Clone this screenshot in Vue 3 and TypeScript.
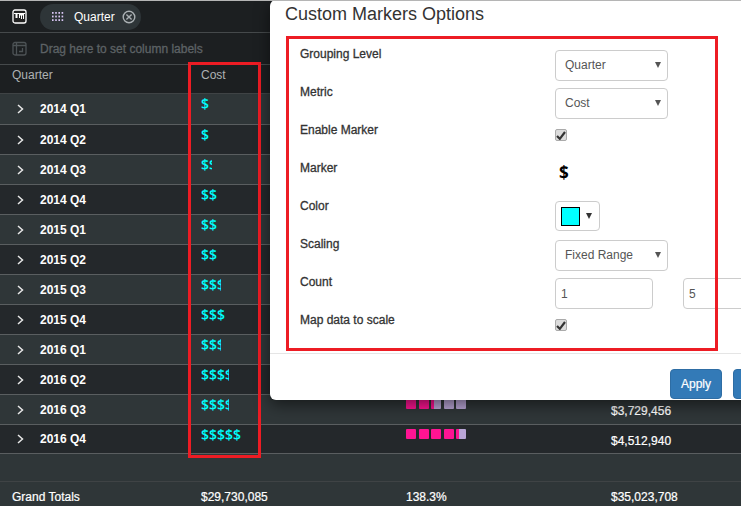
<script setup lang="ts">
interface Row {
  label: string
  clip: number
  fill?: number
  total?: string
}

const rows: Row[] = [
  { label: '2014 Q1', clip: 8 },
  { label: '2014 Q2', clip: 8 },
  { label: '2014 Q3', clip: 11 },
  { label: '2014 Q4', clip: 16 },
  { label: '2015 Q1', clip: 16 },
  { label: '2015 Q2', clip: 16 },
  { label: '2015 Q3', clip: 20 },
  { label: '2015 Q4', clip: 24 },
  { label: '2016 Q1', clip: 20 },
  { label: '2016 Q2', clip: 28 },
  { label: '2016 Q3', clip: 28, fill: 2.3, total: '$3,729,456' },
  { label: '2016 Q4', clip: 40, fill: 4.3, total: '$4,512,940' },
]

function squareStyle(index: number, fill: number) {
  const amount = Math.max(0, Math.min(1, fill - index)) * 100
  return {
    background: `linear-gradient(90deg, #ff1493 ${amount}%, #b9a5d6 ${amount}%)`,
  }
}
</script>

<template>
  <div class="page">
    <div class="shelf">
      <svg class="logo" width="15" height="15" viewBox="0 0 15 15">
        <rect x="1" y="1" width="13" height="13" rx="2" fill="#222" stroke="#fff" stroke-width="1.3" />
        <path d="M2 4h11v1H2zM3.500 5h2v4h-2zM7 5h5v5h-1V6.500h-1V10H9V6.500H8V9H7z" fill="#fff" />
      </svg>
      <div class="pill">
        <svg width="12" height="10" viewBox="0 0 12 10" fill="#d9c6f5">
          <rect v-for="n in 12" :key="n" :x="((n - 1) % 4) * 3.2" :y="Math.floor((n - 1) / 4) * 3.6" width="1.6" height="1.8" />
        </svg>
        <span class="pill-text">Quarter</span>
        <svg width="14" height="14" viewBox="0 0 14 14" fill="none" stroke="#aab0b3" stroke-width="1.4">
          <circle cx="7" cy="7" r="5.800" />
          <path d="M4.400 4.400l5.200 5.200M9.600 4.400l-5.200 5.200" />
        </svg>
      </div>
    </div>
    <div class="shelf shelf-drop">
      <svg width="15" height="15" viewBox="0 0 15 15" fill="none" stroke="#4d5356" stroke-width="1.3">
        <rect x="1" y="1.500" width="13" height="12.500" rx="2" />
        <path d="M1 4.500h13M4.500 1v13M10.500 7v3.500H7" />
      </svg>
      <span>Drag here to set column labels</span>
    </div>

    <div class="table">
      <div class="row head">
        <div class="cell">Quarter</div>
        <div class="cell">Cost</div>
      </div>
      <div v-for="(row, i) in rows" :key="row.label" class="row" :class="i % 2 ? 'even' : 'odd'">
        <div class="cell quarter">
          <svg width="7" height="10" viewBox="0 0 7 10" fill="none" stroke="#e8e8e8" stroke-width="1.5">
            <path d="M1 1l4.500 4-4.500 4" />
          </svg>
          <span>{{ row.label }}</span>
        </div>
        <div class="cell">
          <div class="markers" :style="{ width: row.clip + 'px' }">$$$$$</div>
        </div>
        <div class="cell">
          <div v-if="row.fill" class="squares">
            <i v-for="n in 5" :key="n" :style="squareStyle(n - 1, row.fill)"></i>
          </div>
        </div>
        <div class="cell total">{{ row.total }}</div>
      </div>
      <div class="row spacer"></div>
      <div class="row grand">
        <div class="cell">Grand Totals</div>
        <div class="cell">$29,730,085</div>
        <div class="cell">138.3%</div>
        <div class="cell">$35,023,708</div>
      </div>
    </div>

    <div class="frame frame-cost"></div>

    <div class="modal">
      <h4>Custom Markers Options</h4>
      <div class="frame frame-form"></div>
      <div class="form">
        <label>Grouping Level</label>
        <div class="select">Quarter</div>
        <label>Metric</label>
        <div class="select">Cost</div>
        <label>Enable Marker</label>
        <div class="check">
          <svg width="10" height="9" viewBox="0 0 10 9"><path d="M1 5l2.800 2.800L9 1" fill="none" stroke="#333" stroke-width="2.200" /></svg>
        </div>
        <label>Marker</label>
        <div class="marker">$</div>
        <label>Color</label>
        <div class="color"><i></i><b></b></div>
        <label>Scaling</label>
        <div class="select">Fixed Range</div>
        <label>Count</label>
        <div class="count">
          <input value="1" />
          <input value="5" />
        </div>
        <label>Map data to scale</label>
        <div class="check">
          <svg width="10" height="9" viewBox="0 0 10 9"><path d="M1 5l2.800 2.800L9 1" fill="none" stroke="#333" stroke-width="2.200" /></svg>
        </div>
      </div>
      <div class="footer">
        <button>Apply</button>
        <button class="cancel">Cancel</button>
      </div>
    </div>
  </div>
</template>

<style>
html,
body {
  margin: 0;
  background: #1c1f21;
}
</style>

<style scoped>
.page {
  position: relative;
  width: 741px;
  height: 506px;
  overflow: hidden;
  background: #1c1f21;
  border-top: 1px solid #b5b5b5;
  box-sizing: border-box;
  font: 12px "Liberation Sans", Arial, sans-serif;
}
.shelf {
  display: flex;
  align-items: center;
  gap: 13px;
  height: 32px;
  padding-left: 12px;
  box-sizing: border-box;
  border-bottom: 1px solid #45494b;
}
.logo {
  flex: none;
}
.pill {
  display: flex;
  align-items: center;
  gap: 7px;
  width: 101px;
  height: 26px;
  padding-left: 12px;
  box-sizing: border-box;
  border-radius: 13px;
  background: #2e3538;
  color: #fff;
}
.pill-text {
  margin-left: 3px;
}
.shelf-drop {
  color: #5d6265;
  -webkit-text-stroke: 0.3px #5d6265;
}
.table {
  display: flex;
  flex-direction: column;
}
.row {
  display: grid;
  grid-template-columns: 189px 205px 205px 142px;
  height: 30px;
  box-sizing: border-box;
  border-bottom: 1px solid #5a5e60;
}
.row.head {
  height: 29px;
  color: #aeb2b4;
  border-bottom-color: #3f4345;
}
.head .cell {
  padding-top: 3px;
}
.row:nth-child(2) {
  height: 31px;
}
.row:nth-child(13) {
  height: 29px;
}
.odd {
  background: #2f3638;
}
.even {
  background: #24282b;
}
.cell {
  padding-left: 12px;
}
.quarter {
  display: flex;
  align-items: center;
  gap: 16px;
  padding-left: 17px;
  font-weight: 700;
  color: #fff;
}
.markers {
  overflow: hidden;
  margin-top: 2px;
  font: 600 14px/16px "Open Sans", sans-serif;
  color: #0ff;
  white-space: nowrap;
}
.squares {
  display: flex;
  gap: 2.5px;
  padding-top: 4px;
}
.squares i {
  display: block;
  width: 10px;
  height: 10px;
  border-radius: 1px;
}
.total {
  padding-top: 9px;
  color: #fff;
  -webkit-text-stroke: 0.2px #fff;
}
.row.spacer {
  height: 28px;
  background: #2f3638;
  border-bottom-color: #3f4345;
}
.row.grand {
  height: 24px;
  padding-top: 8px;
  background: #2f3638;
  color: #fff;
  border: 0;
  -webkit-text-stroke: 0.2px #fff;
}
.frame {
  position: absolute;
  box-sizing: border-box;
  border: 3px solid #ed1c24;
  pointer-events: none;
}
.frame-cost {
  left: 188px;
  top: 61px;
  width: 73px;
  height: 396px;
}
.modal {
  position: absolute;
  left: 270px;
  top: -1px;
  width: 500px;
  height: 400px;
  background: #fff;
  border-radius: 6px;
  box-shadow: 0 5px 15px rgba(0, 0, 0, 0.5);
  color: #333;
}
.modal h4 {
  margin: 0;
  padding: 4px 0 0 15px;
  font-size: 18px;
  font-weight: 400;
  line-height: 20px;
}
.frame-form {
  left: 16px;
  top: 36px;
  width: 432px;
  height: 315px;
}
.form {
  display: grid;
  grid-template-columns: 255px 1fr;
  grid-auto-rows: 38px;
  margin: 26px 0 0 30px;
  height: 303px;
}
.form label {
  margin-top: -3px;
  -webkit-text-stroke: 0.3px #333;
}
.select,
.count input,
.color {
  box-sizing: border-box;
  height: 31px;
  border: 1px solid #ccc;
  border-radius: 4px;
  background: #fff;
  color: #555;
  font: inherit;
}
.select {
  position: relative;
  width: 113px;
  line-height: 29px;
  padding-left: 9px;
}
.select::after {
  content: "";
  position: absolute;
  right: 6px;
  top: 11px;
  border: 3.5px solid transparent;
  border-top: 6px solid #555;
  border-bottom: 0;
}
.check {
  display: flex;
  align-items: center;
  justify-content: center;
  width: 12px;
  height: 12px;
  margin-top: 3px;
  box-sizing: border-box;
  border: 1px solid #aaa;
  border-radius: 2px;
  background: #dcdcdc;
}
.marker {
  margin-top: -1px;
  padding-left: 4px;
  font: 700 17px/20px "Open Sans", sans-serif;
  color: #000;
}
.color {
  display: flex;
  align-items: center;
  gap: 6px;
  width: 45px;
  height: 30px;
  margin-top: -1px;
  padding-left: 5px;
}
.color i {
  width: 19px;
  height: 19px;
  box-sizing: border-box;
  border: 1px solid #000;
  background: #0ff;
}
.color b {
  border: 3.5px solid transparent;
  border-top: 6px solid #333;
  border-bottom: 0;
}
.count {
  display: flex;
  gap: 30px;
}
.count input {
  flex: none;
  width: 98px;
  padding: 0 5px;
  outline: none;
}
.footer {
  display: flex;
  gap: 11px;
  height: 46px;
  padding: 15px 0 0 400px;
  border-top: 1px solid #e5e5e5;
}
.footer button {
  flex: none;
  width: 52px;
  height: 30px;
  padding: 0;
  border: 1px solid #2e6da4;
  border-radius: 4px;
  background: #337ab7;
  color: #fff;
  font: 12px "Liberation Sans", Arial, sans-serif;
  -webkit-text-stroke: 0.2px #fff;
}
.footer .cancel {
  width: 64px;
}
</style>
